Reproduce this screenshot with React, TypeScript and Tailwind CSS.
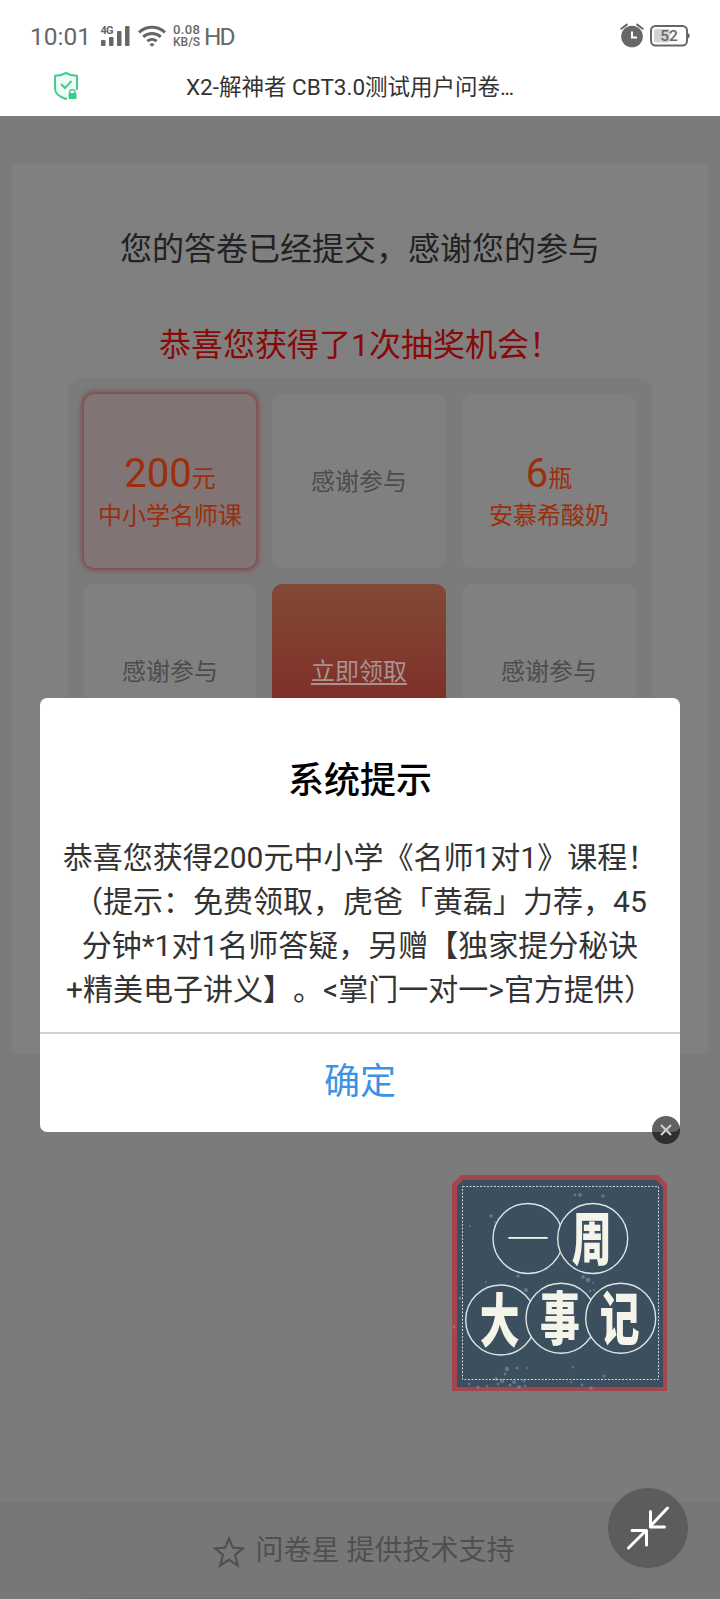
import { ReactNode } from "react";

type Prize = {
    amount?: string;
    unit?: string;
    name: string;
    active?: boolean;
}

const firstRow: Prize[] = [
    { amount: "200", unit: "元", name: "中小学名师课", active: true },
    { name: "感谢参与" },
    { amount: "6", unit: "瓶", name: "安慕希酸奶" },
];

const messageLines = [
    "恭喜您获得200元中小学《名师1对1》课程！",
    "（提示：免费领取，虎爸「黄磊」力荐，45",
    "分钟*1对1名师答疑，另赠【独家提分秘诀",
    "+精美电子讲义】。<掌门一对一>官方提供）",
];

const stamps = [
    { char: "一", x: 76, y: 63.5, weight: 100 },
    { char: "周", x: 140.7, y: 63.5, weight: 900 },
    { char: "大", x: 48.7, y: 145, weight: 900 },
    { char: "事", x: 109, y: 143.3, weight: 900 },
    { char: "记", x: 168.7, y: 143.3, weight: 900 },
];

const specks = [
    [128, 20, 2], [123, 20, 1.4], [151, 21, 1.8], [39, 41, 1.8], [43, 47, 1], [18, 51, 1],
    [66, 101, 1.8], [131, 102, 2], [136, 105, 2.4], [141, 108, 1], [74, 115, 2], [8, 123, 1.6],
    [34, 107, 1], [138, 116, 1.4], [55, 194, 2.2], [65, 193, 1.6], [44, 204, 2], [50, 206, 2.2],
    [62, 207, 2], [67, 212, 2], [72, 206, 1.4], [75, 193, 1], [17, 209, 1.2], [26, 212, 1.6],
    [35, 211, 1.2], [121, 192, 1.2], [152, 201, 1.6], [130, 210, 1.4], [139, 213, 1.8], [119, 207, 1],
    [53, 199, 1.4], [46, 209, 1.5], [58, 210, 1.6], [73, 211, 1.3], [2, 152, 1.5], [142, 115, 1],
];

const StatusBar = () => (
    <div className="h-[60px] pt-[11px] pl-[30px] pr-[30px] flex items-center text-[#676767]">
        <span className="mt-[3px] text-[24.5px] leading-none w-[62px]">10:01</span>
        <svg className="w-[30px] h-[22px] ml-[8px]" viewBox="0 0 30 22" fill="#676767">
            <text x="0.5" y="8.8" fontSize="11" fontWeight="700" textLength="13" fontFamily="Roboto, sans-serif">4G</text>
            <rect x="1" y="15" width="4.5" height="6" rx="1" />
            <rect x="9" y="12" width="4.5" height="9" rx="1" />
            <rect x="17" y="6" width="4.5" height="15" rx="1" />
            <rect x="25" y="1" width="4.5" height="20" rx="1" />
        </svg>
        <svg className="w-[28px] h-[22px] ml-[8px]" viewBox="0 0 28 22" fill="none" stroke="#676767" strokeWidth="2.9">
            <path d="M1 7.3C8.6.5 19.4.5 27 7.3" />
            <path d="M5.2 11.8c5-4.5 12.6-4.5 17.6 0" />
            <path d="M9.3 16.2c2.8-2.4 6.6-2.4 9.4 0" />
            <path d="M11.4 19.1c1.6-1.3 3.6-1.3 5.2 0L14 21.9z" fill="#676767" stroke="none" />
        </svg>
        <div className="ml-[7px] w-[29px] leading-[12px] font-medium flex flex-col">
            <span className="text-[13px] tracking-[0.4px]">0.08</span>
            <span className="text-[12px]">KB/S</span>
        </div>
        <span className="ml-[2px] mt-[3px] text-[24.5px] leading-none tracking-[-2px]">HD</span>
        <svg className="w-[24px] h-[25px] ml-auto" viewBox="0 0 24 25">
            <circle cx="12" cy="13.5" r="10.8" fill="#676767" />
            <path d="M12 8.5v6h5" fill="none" stroke="#fff" strokeWidth="2" />
            <path d="M1.3 5.8 6.8 1.6M22.7 5.8l-5.5-4.2" stroke="#676767" strokeWidth="2" strokeLinecap="round" />
        </svg>
        <svg className="w-[41px] h-[22px] ml-[5px]" viewBox="0 0 41 22">
            <rect x="2" y="1" width="36" height="19.5" rx="4.5" fill="#fff" stroke="#676767" strokeWidth="2" />
            <rect x="5" y="4" width="16" height="13.5" rx="2" fill="#d3d3d3" />
            <path d="M39 8.3c2.4.6 2.4 4.4 0 5z" fill="#676767" />
            <text x="20" y="16" fontSize="15.5" fontWeight="500" textAnchor="middle" fill="#676767" fontFamily="Roboto, sans-serif">52</text>
        </svg>
    </div>
);

const TitleBar = () => (
    <div className="h-[56px] flex items-center">
        <svg className="w-[26px] h-[30px] ml-[53px] mb-[5px]" viewBox="0 0 26 30" fill="none">
            <path d="M13 1.8C9.5 4 6 4.6 2 4.8v13c0 5.5 5 8.2 11 10.2 6-2 11-4.7 11-10.2v-13C20 4.6 16.5 4 13 1.8z" fill="#effcf5" stroke="#45cd92" strokeWidth="2" strokeLinejoin="round" />
            <path d="M8 13l4 4 6.5-7" stroke="#45cd92" strokeWidth="2" />
            <path d="M14 19h12v11H14z" fill="#fff" />
            <path d="M16.5 23v-1.5a2.8 2.8 0 0 1 5.6 0V23" stroke="#45cd92" strokeWidth="1.5" />
            <rect x="15.5" y="22" width="8" height="6" rx="1" fill="#33cf84" />
        </svg>
        <h1 className="ml-[107px] text-[22.5px] leading-[30px] mb-[3px] text-[#333] whitespace-nowrap">X2-解神者 CBT3.0测试用户问卷<span className="tracking-[-1.7px]">...</span></h1>
    </div>
);

const Cell = ({ active, children }: { active?: boolean; children?: ReactNode }) => (
    <div className={active
        ? "h-[174px] rounded-[10px] bg-[#807574] shadow-[0_0_6px_1px_#872f2f] flex flex-col items-center justify-center"
        : "h-[174px] rounded-[10px] bg-[#808080] flex flex-col items-center justify-center"}>
        {children}
    </div>
);

const Thanks = () => <span className="mt-[2px] text-[24px] leading-[32px] text-[#4c4c4c]">感谢参与</span>;

const Sticker = () => (
    <svg className="w-[216px] h-[217px]" viewBox="0 0 216 217">
        <path d="M9 0h197l9 9v207H0V9z" fill="#a5454e" />
        <path d="M11 5h193l7 7v200H5V11z" fill="#3b4f5f" />
        {specks.map(([x, y, r], i) => (
            <circle key={i} cx={x} cy={y} r={r} fill="#8fa0aa" opacity="0.5" />
        ))}
        <rect x="10.5" y="11.5" width="196" height="193" fill="none" stroke="#ccd5da" strokeWidth="1" strokeDasharray="2 1.5" />
        {stamps.map((s) => (
            <g key={s.char}>
                <circle cx={s.x} cy={s.y} r="35" fill="#3b4f5f" stroke="#dce4e3" strokeWidth="1.4" />
                <text
                    transform={s.weight === 100 ? `translate(${s.x} ${s.y + 20}) scale(0.85 1.08)` : `translate(${s.x - 1} ${s.y + 21.5}) scale(0.78 1.14)`}
                    fontSize="51"
                    fontWeight={s.weight}
                    textAnchor="middle"
                    fill="#f5f4e9"
                    fontFamily="'Noto Sans CJK SC', sans-serif"
                >{s.char}</text>
            </g>
        ))}
    </svg>
);

const Dialog = () => (
    <div className="absolute left-[40px] top-[698px] w-[640px] h-[434px] rounded-[7px] bg-white flex flex-col text-center">
        <h2 className="mt-[57px] h-[52px] text-[36px] leading-[52px] font-medium text-black">系统提示</h2>
        <div className="mt-[29px] text-[30px] leading-[44px] text-[#333] whitespace-nowrap [text-spacing-trim:space-all]">
            {messageLines.map((line) => <p key={line}>{line}</p>)}
        </div>
        <button className="mt-auto h-[100px] pb-[2px] border-t-2 border-[#cfcfcf] text-[36px] text-[#3c93e5]">确定</button>
    </div>
);

const App = () => {
    return (
        <div className="relative w-[720px] h-[1600px] overflow-hidden bg-white flex flex-col font-[Roboto,'Noto_Sans_CJK_SC',sans-serif]">
            <StatusBar />
            <TitleBar />

            {/* Página atenuada */}
            <div className="flex-1 bg-[#7b7b7b] flex flex-col">
                <div className="mt-[48px] mx-[12px] h-[890px] bg-[#808080] text-center">
                    <h2 className="pt-[61px] text-[32px] leading-[48px] text-[#222]">您的答卷已经提交，感谢您的参与</h2>
                    <p className="mt-[48px] text-[32px] leading-[48px] text-[#8a0808]">恭喜您获得了1次抽奖机会！</p>
                    <div className="mt-[9px] mx-auto w-[584px] h-[586px] p-[16px] rounded-[14px] bg-[#7b7b7b] grid grid-cols-[172px_174px_174px] gap-[16px] content-start">
                        {firstRow.map((prize, i) => (
                            <Cell key={i} active={prize.active}>
                                {prize.amount ? (
                                    <div className="text-[#9c2e0c]">
                                        <p className="h-[44px] leading-[44px] mt-[23px]"><span className="text-[40px]">{prize.amount}</span><span className="text-[24px]">{prize.unit}</span></p>
                                        <p className="mt-[2px] text-[24px] leading-[36px]">{prize.name}</p>
                                    </div>
                                ) : <Thanks />}
                            </Cell>
                        ))}
                        <Cell><Thanks /></Cell>
                        <div className="h-[174px] rounded-[10px] bg-gradient-to-b from-[#824936] to-[#7d1f20] flex items-center justify-center">
                            <a className="mt-[2px] text-[24px] leading-[32px] text-[#a89391] underline decoration-2 underline-offset-[3px]">立即领取</a>
                        </div>
                        <Cell><Thanks /></Cell>
                    </div>
                </div>
                <footer className="mt-auto h-[98px] bg-[#777] flex flex-col justify-between">
                    <div className="flex items-center pl-[213px] pt-[27px] text-[#505050]">
                        <svg className="w-[32px] h-[34px] mt-[3px]" viewBox="0 0 32 34" fill="none" stroke="#505050" strokeWidth="2.2">
                            <path d="M16 3.5l3.8 9.2 10 .7-7.7 6.4 2.7 10.7-8.8-5.6-8.8 5.6 2.7-10.7L2.2 13.4l10-.7z" />
                        </svg>
                        <span className="ml-[10.5px] mt-px text-[28px] leading-[42px]">问卷星 提供技术支持</span>
                    </div>
                    <div className="h-[2px] px-[84px] border-b border-[#d8d8d8] flex">
                        <div className="w-[163px] bg-[#6c6c6c]" />
                        <div className="ml-px w-[224px] bg-[#6c6c6c]" />
                        <div className="ml-px flex-1 bg-[#6c6c6c]" />
                    </div>
                </footer>
            </div>

            <Dialog />

            {/* Anuncio flotante */}
            <div className="absolute left-[452px] top-[1175px]">
                <Sticker />
            </div>
            <div className="absolute left-[652px] top-[1116px] size-[28px] rounded-full bg-black/62 flex items-center justify-center">
                <svg className="size-[12px]" viewBox="0 0 12 12" stroke="#d2d2d2" strokeWidth="2">
                    <path d="M1 1l10 10M11 1L1 11" />
                </svg>
            </div>

            <div className="absolute left-[608px] top-[1488px] size-[80px] rounded-full bg-[#5c5c5c] flex items-center justify-center">
                <svg className="size-[44px]" viewBox="0 0 44 44" fill="none" stroke="#fff" strokeWidth="3" strokeLinecap="round" strokeLinejoin="round">
                    <path d="M41.5 2L24.5 20M24.5 5.5v15.500H38.500" />
                    <path d="M2.500 42L20 24.500M6 24.500H20.500V39" />
                </svg>
            </div>
        </div>
    );
};

export default App;
